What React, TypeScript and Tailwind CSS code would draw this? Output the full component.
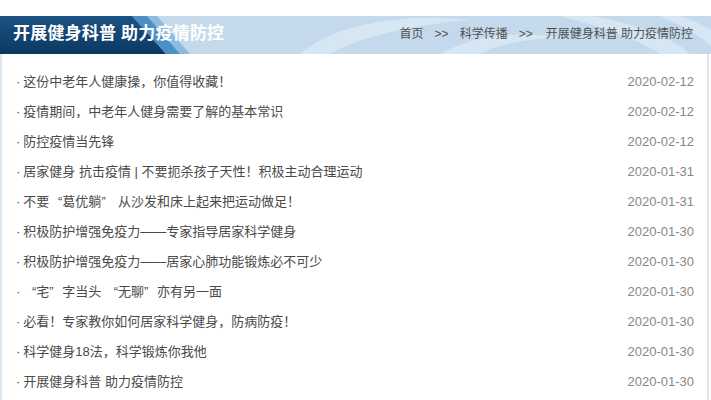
const ITEMS: [string, string][] = [
  ['这份中老年人健康操，你值得收藏！', '2020-02-12'],
  ['疫情期间，中老年人健身需要了解的基本常识', '2020-02-12'],
  ['防控疫情当先锋', '2020-02-12'],
  ['居家健身 抗击疫情 | 不要扼杀孩子天性！积极主动合理运动', '2020-01-31'],
  ['不要“葛优躺” 从沙发和床上起来把运动做足！', '2020-01-31'],
  ['积极防护增强免疫力——专家指导居家科学健身', '2020-01-30'],
  ['积极防护增强免疫力——居家心肺功能锻炼必不可少', '2020-01-30'],
  ['“宅”字当头 “无聊”亦有另一面', '2020-01-30'],
  ['必看！专家教你如何居家科学健身，防病防疫！', '2020-01-30'],
  ['科学健身18法，科学锻炼你我他', '2020-01-30'],
  ['开展健身科普 助力疫情防控', '2020-01-30'],
]

// curly quotes render full-width in the original (YaHei), so give them a CJK-sized box
function Title({ text }: { text: string }) {
  const parts = text.split(/([“”])/)
  return (
    <>
      {parts.map((p, i) =>
        p === '“' ? (
          <span key={i} className="inline-block w-[13px] text-right">“</span>
        ) : p === '”' ? (
          <span key={i} className="inline-block w-[13px] text-left">”</span>
        ) : (
          <span key={i}>{p}</span>
        )
      )}
    </>
  )
}

function HeaderArt() {
  return (
    <svg className="absolute inset-0" width="711" height="38" viewBox="0 0 711 38" preserveAspectRatio="none">
      <defs>
        <linearGradient id="dark" x1="0" y1="0" x2="0" y2="1">
          <stop offset="0" stopColor="#1c5384" />
          <stop offset="1" stopColor="#0b3862" />
        </linearGradient>
      </defs>
      <rect width="711" height="38" fill="#c4daec" />
      {/* soft swirls behind the breadcrumb */}
      <path d="M300 38 C 330 10, 400 -4, 470 4 C 420 8, 360 20, 330 38 Z" fill="#d6e6f3" />
      <path d="M440 38 C 470 20, 520 14, 560 22 C 530 22, 500 28, 480 38 Z" fill="#d6e6f3" />
      <path d="M560 0 C 600 10, 640 24, 660 38 L 690 38 C 670 18, 620 4, 590 0 Z" fill="#d6e6f3" />
      <path d="M660 0 C 680 8, 700 20, 711 30 L 711 14 C 700 8, 690 3, 680 0 Z" fill="#d6e6f3" />
      <polygon points="147,0 157,0 190,38 180,38" fill="#8dbbe0" />
      <polygon points="132,0 147,0 180,38 166,38" fill="#4a8fc6" />
      <polygon points="0,0 132,0 166,38 0,38" fill="url(#dark)" />
    </svg>
  )
}

export default function App() {
  return (
    <div className="w-[711px] h-[400px] overflow-hidden bg-white pt-4 font-['Liberation_Sans','Noto_Sans_CJK_SC',sans-serif]">
      <div className="relative flex h-[38px] items-center justify-between border-b-2 border-[#dbe8f4]">
        <HeaderArt />
        <h2 className="relative pl-[13px] text-[17px] font-bold text-white tracking-[0.2px]">
          开展健身科普 助力疫情防控
        </h2>
        <div className="relative flex items-center pr-[18px] text-[12px] text-[#505050]">
          <span>首页</span>
          <span className="mx-[11px]">&gt;&gt;</span>
          <span>科学传播</span>
          <span className="ml-[11px] mr-[13px]">&gt;&gt;</span>
          <span>开展健身科普 助力疫情防控</span>
        </div>
      </div>
      <ul className="w-[709px] border-x-2 border-[#dbe8f4] pt-[13px] pb-4">
        {ITEMS.map(([title, date], i) => (
          <li key={i} className="flex h-[30px] items-center justify-between pl-[14px] pr-[13px] text-[13px]">
            <span className="text-[#4a4a4a]">
              <span className="mr-[3px]">·</span>
              <Title text={title} />
            </span>
            <span className="text-[#888]">{date}</span>
          </li>
        ))}
      </ul>
    </div>
  )
}
